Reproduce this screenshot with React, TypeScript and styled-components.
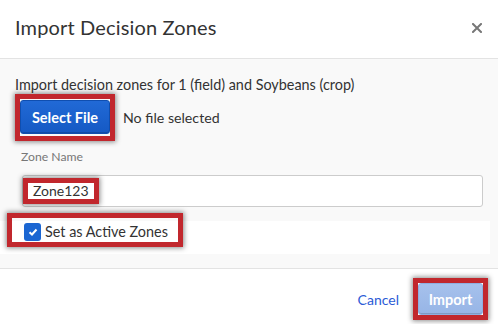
import React from "react";
import styled, { createGlobalStyle } from "styled-components";

const Global = createGlobalStyle`
  html, body { margin: 0; padding: 0; background: #fff; }
  body { font-family: Lato, "Open Sans", Arial, sans-serif; color: #333; }
  * { box-sizing: border-box; }
`;

const Dialog = styled.div`
  width: 498px;
  height: 324px;
  display: flex;
  flex-direction: column;
  background: #fff;
  overflow: hidden;
`;

const Header = styled.div`
  height: 59px;
  flex: none;
  display: flex;
  align-items: center;
  justify-content: space-between;
  padding: 0 16px 4px 15px;
  border-bottom: 1px solid #e3e3e3;
`;

const Title = styled.h1`
  margin: 0;
  font-size: 20px;
  font-weight: 400;
  color: #333;
  letter-spacing: 0.15px;
`;

const Close = styled.button`
  border: 0;
  background: none;
  padding: 0;
  width: 10px;
  height: 10px;
  display: flex;
  margin-top: 2px;
  cursor: pointer;
`;

const Body = styled.div`
  flex: 1;
  background: #f9f9f9;
  padding: 17px 15px 0 15px;
  border-bottom: 1px solid #e3e3e3;
`;

const Intro = styled.p`
  margin: 0;
  font-size: 14.4px;
  line-height: 18px;
  color: #333;
`;

const Highlight = styled.div<{ $pad?: string }>`
  display: inline-flex;
  border: 5px solid #c1272d;
  box-shadow: 0 0 5px 1px rgba(0, 0, 0, 0.45);
  padding: ${(p) => p.$pad || "0"};
`;

const FileRow = styled.div`
  display: flex;
  align-items: center;
  gap: 8px;
`;

const PrimaryButton = styled.button<{ $disabled?: boolean }>`
  font-family: inherit;
  font-size: 14.5px;
  font-weight: 700;
  color: #fff;
  border-radius: 3px;
  cursor: pointer;
  border: 1px solid ${(p) => (p.$disabled ? "#8eaee0" : "#0f4eb0")};
  background: ${(p) =>
    p.$disabled
      ? "linear-gradient(#a6c1ec, #97b5e6)"
      : "linear-gradient(#2169d6, #1559c4)"};
  box-shadow: inset 0 -1px 0 rgba(0, 0, 0, 0.15);
`;

const SelectButton = styled(PrimaryButton)`
  width: 90px;
  height: 34px;
  padding: 0;
`;

const NoFile = styled.span`
  font-size: 14.2px;
  color: #333;
`;

const Group = styled.div`
  padding: 8px 0 0 6px;
`;

const Label = styled.label`
  display: block;
  font-size: 12.2px;
  line-height: 16px;
  color: #777;
  margin-bottom: 10px;
`;

const InputBox = styled.div`
  margin-left: 1px;
  height: 32px;
  border: 1px solid #ccc;
  border-radius: 3px;
  background: #fff;
  padding-top: 2px;
`;

const InputText = styled.span`
  font-size: 14px;
  line-height: 16px;
  color: #333;
`;

const CheckRow = styled.div`
  position: relative;
  margin: 14px -7px 0 -15px;
  height: 33px;
  background: #fff;
  display: flex;
  align-items: flex-start;
  padding: 2px 0 0 24px;
`;

const CheckItem = styled.div`
  display: flex;
  align-items: center;
  gap: 4px;
  height: 18px;
`;

const Box = styled.span`
  width: 17px;
  height: 18px;
  border-radius: 3px;
  background: #1b66d2;
  display: inline-flex;
  align-items: center;
  justify-content: center;
`;

const CheckText = styled.span`
  font-size: 14.4px;
  color: #333;
  line-height: 18px;
`;

const Overlay = styled.div`
  position: absolute;
  left: 7px;
  top: -8px;
  width: 176px;
  height: 34px;
  border: 5px solid #c1272d;
  box-shadow: 0 0 5px 1px rgba(0, 0, 0, 0.45);
  pointer-events: none;
`;

const Footer = styled.div`
  height: 55px;
  flex: none;
  display: flex;
  justify-content: flex-end;
  align-items: flex-start;
  padding: 9px 10px 0 0;
  gap: 14px;
`;

const LinkButton = styled.button`
  border: 0;
  background: none;
  font-family: inherit;
  font-size: 14px;
  color: #2b5bd6;
  padding: 0;
  height: 42px;
  cursor: pointer;
`;

const ImportButton = styled(PrimaryButton)`
  width: 65px;
  height: 32px;
  padding: 0;
`;

export default function App() {
  return (
    <>
      <Global />
      <Dialog>
        <Header>
          <Title>Import Decision Zones</Title>
          <Close aria-label="Close">
            <svg width="10" height="10" viewBox="0 0 10 10">
              <path d="M1 1L9 9M9 1L1 9" stroke="#777" strokeWidth="2" strokeLinecap="square" />
            </svg>
          </Close>
        </Header>
        <Body>
          <Intro>Import decision zones for 1 (field) and Soybeans (crop)</Intro>
          <FileRow>
            <Highlight $pad="1px 0 2px">
              <SelectButton>Select File</SelectButton>
            </Highlight>
            <NoFile>No file selected</NoFile>
          </FileRow>
          <Group>
            <Label>Zone Name</Label>
            <InputBox>
              <Highlight $pad="0 5px">
                <InputText>Zone123</InputText>
              </Highlight>
            </InputBox>
          </Group>
          <CheckRow>
            <CheckItem>
              <Box>
                <svg width="10" height="8" viewBox="0 0 10 8">
                  <path d="M1.5 4.2L4 6.5L8.5 1.5" stroke="#fff" strokeWidth="2" fill="none" />
                </svg>
              </Box>
              <CheckText>Set as Active Zones</CheckText>
            </CheckItem>
            <Overlay />
          </CheckRow>
        </Body>
        <Footer>
          <LinkButton>Cancel</LinkButton>
          <Highlight>
            <ImportButton $disabled>Import</ImportButton>
          </Highlight>
        </Footer>
      </Dialog>
    </>
  );
}
